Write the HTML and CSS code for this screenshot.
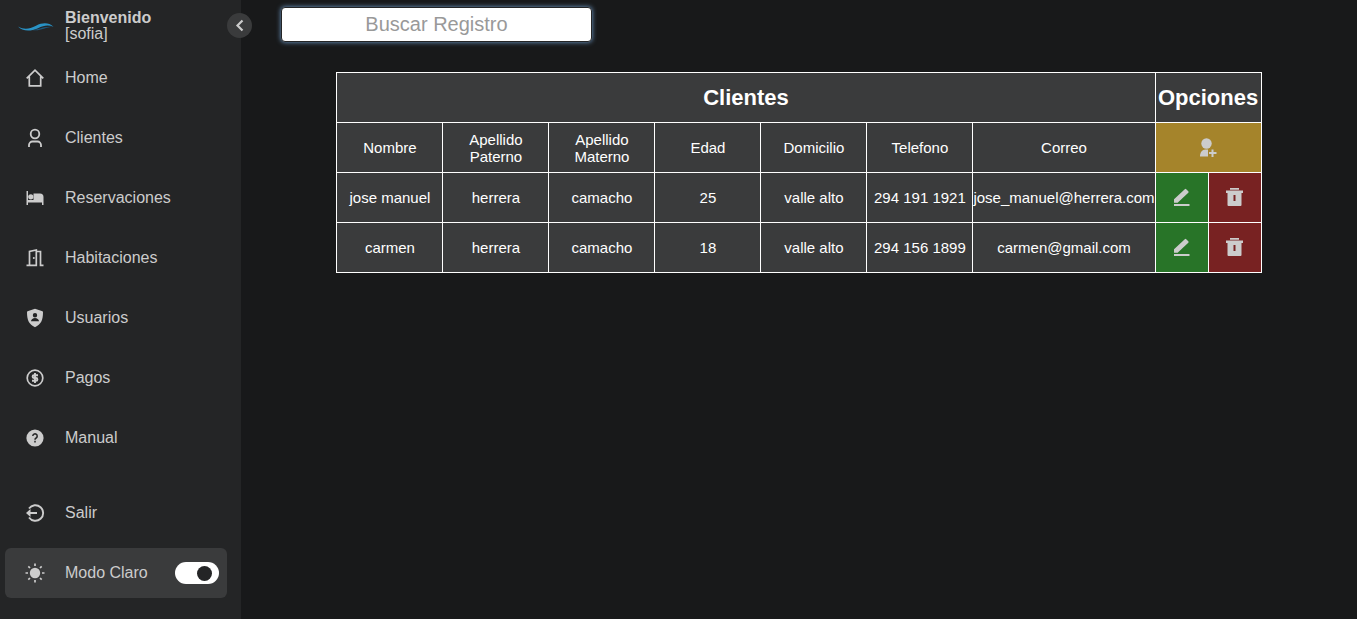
FILE: index.html
```html
<!DOCTYPE html>
<html lang="es">
<head>
<meta charset="utf-8">
<meta name="viewport" content="width=device-width, initial-scale=1">
<title>Clientes</title>
<link rel="stylesheet" href="styles.css">
</head>
<body>
<svg class="sprite" aria-hidden="true">
  <symbol id="edit" viewBox="0 0 20 20"><path d="M2 11.300v3.400h3.600L16.300 4.700a1 1 0 0 0 0-1.400l-2.100-2.100a1 1 0 0 0-1.400 0z" fill="currentColor"/><path d="M2 17H17.500" stroke="currentColor" stroke-width="2"/></symbol>
  <symbol id="trash" viewBox="0 0 20 20"><path fill="currentColor" fill-rule="evenodd" d="M5 0h9v1.800H5zM1 2.500h17V5h-1.500v12a1 1 0 0 1-1 1h-12a1 1 0 0 1-1-1V5H1zM8.500 7v6h2V7z"/></symbol>
</svg>
<aside class="sidebar">
  <header class="profile">
    <svg class="logo" viewBox="0 -2 36 12" aria-hidden="true">
      <path d="M0 4.500C6 7.800 11 7.300 18 3.700 25 .1 31 .6 35.500 4.700 30 2.600 26 3.300 20 6.200 12 10 4 9.200 0 4.500z" fill="#2993c6"/>
      <path d="M14 8C21 8 24 3.800 35 4.800 27 5.300 22 9.500 14 8z" fill="#1d587d"/>
    </svg>
    <div><strong>Bienvenido</strong><span>[sofia]</span></div>
    <button class="collapse" type="button" aria-label="Contraer menú"><svg viewBox="0 0 20 20"><path d="M12.500 4.500 7.500 9.500l5 5" fill="none" stroke="currentColor" stroke-width="2.200"/></svg></button>
  </header>
  <nav class="menu">
    <a href="#"><svg viewBox="0 0 20 20"><path d="M1.700 10.300 10 2.200l8.300 8.100M4.300 8.500v9.300h11.400V8.500" fill="none" stroke="currentColor" stroke-width="1.700"/></svg>Home</a>
    <a href="#"><svg viewBox="0 0 20 20"><g fill="none" stroke="currentColor" stroke-width="1.800"><circle cx="10" cy="6" r="4.300"/><path d="M4 19v-2a3.500 3.500 0 0 1 3.500-3.500h5A3.500 3.500 0 0 1 16 17v2"/></g></svg>Clientes</a>
    <a href="#"><svg viewBox="0 0 20 20"><path fill="currentColor" d="M1.500 3H3v9h5.500V5.500H15A3.500 3.500 0 0 1 18.500 9v8H17v-2.500H3V17H1.500z"/><circle cx="5.800" cy="8.800" r="2.600" fill="currentColor"/></svg>Reservaciones</a>
    <a href="#"><svg viewBox="0 0 20 20"><path d="M1.500 17.300h3V3.500L11.300 2v15.300H4.500M11 3.500h4.500v13.800h3" fill="none" stroke="currentColor" stroke-width="1.700"/><circle cx="8.800" cy="10" r="1" fill="currentColor"/></svg>Habitaciones</a>
    <a href="#"><svg viewBox="0 0 20 20"><path fill="currentColor" fill-rule="evenodd" d="M10 .8 17.500 3.300a1 1 0 0 1 .5 1c0 8-2 12-8 15-6-3-8-7-8-15a1 1 0 0 1 .5-1zM10 5a2.200 2.200 0 1 0 0 4.400A2.200 2.200 0 0 0 10 5zM6 13.300h8c0-2-2-3.300-4-3.300s-4 1.300-4 3.300z"/></svg>Usuarios</a>
    <a href="#"><svg viewBox="0 0 20 20"><g fill="none" stroke="currentColor"><circle cx="10" cy="10" r="7.800" stroke-width="1.700"/><path d="M13 7.200H9a1.400 1.400 0 0 0 0 2.800h2a1.400 1.400 0 0 1 0 2.800H7M10 5v10" stroke-width="1.900"/></g></svg>Pagos</a>
    <a href="#"><svg viewBox="0 0 20 20"><circle cx="10" cy="10" r="8.600" fill="currentColor"/><path d="M7.800 8a2.200 2.200 0 1 1 3.300 2c-.8.400-1.100.8-1.100 1.700M10 12.800v1.700" fill="none" stroke="#242526" stroke-width="1.500"/></svg>Manual</a>
  </nav>
  <div class="menu">
    <a href="#"><svg viewBox="0 0 20 20"><path d="M4 5.500A7.800 7.800 0 1 1 4 14.500M4 10h8" fill="none" stroke="currentColor" stroke-width="1.900"/><path d="M5.500 6v8L1 10z" fill="currentColor"/></svg>Salir</a>
    <label class="mode"><svg viewBox="0 0 20 20"><circle cx="10" cy="10" r="5.200" fill="currentColor"/><path d="M10 .5v2.500M10 17v2.500M.5 10H3M17 10h2.500M3.300 3.300 5 5M15 15l1.700 1.700M3.300 16.700 5 15M15 5l1.700-1.700" stroke="currentColor" stroke-width="1.700"/></svg><span>Modo Claro</span><input type="checkbox" role="switch" checked></label>
  </div>
</aside>
<main class="content">
  <input class="search" type="text" placeholder="Buscar Registro" aria-label="Buscar Registro">
  <table class="clients">
    <thead>
      <tr class="title"><th colspan="7">Clientes</th><th colspan="2">Opciones</th></tr>
      <tr class="fields"><th>Nombre</th><th>Apellido Paterno</th><th>Apellido Materno</th><th>Edad</th><th>Domicilio</th><th>Telefono</th><th>Correo</th>
        <td class="action add" colspan="2"><button type="button" aria-label="Agregar cliente"><svg viewBox="0 0 20 20"><circle cx="8.500" cy="5.500" r="5.200" fill="currentColor"/><path d="M2 18.500c0-4 2-7 5.500-7H10v7z" fill="currentColor"/><path d="M14.500 11.500v7.500M11 15h7.500" stroke="currentColor" stroke-width="2"/></svg></button></td></tr>
    </thead>
    <tbody>
      <tr><td>jose manuel</td><td>herrera</td><td>camacho</td><td>25</td><td>valle alto</td><td>294 191 1921</td><td>jose_manuel@herrera.com</td>
        <td class="action edit"><button type="button" aria-label="Editar jose manuel"><svg><use href="#edit"/></svg></button></td><td class="action delete"><button type="button" aria-label="Eliminar jose manuel"><svg><use href="#trash"/></svg></button></td></tr>
      <tr><td>carmen</td><td>herrera</td><td>camacho</td><td>18</td><td>valle alto</td><td>294 156 1899</td><td>carmen@gmail.com</td>
        <td class="action edit"><button type="button" aria-label="Editar carmen"><svg><use href="#edit"/></svg></button></td><td class="action delete"><button type="button" aria-label="Eliminar carmen"><svg><use href="#trash"/></svg></button></td></tr>
    </tbody>
  </table>
</main>
</body>
</html>
```

FILE: styles.css
```css
* { box-sizing: border-box; }
body {
  display: flex;
  min-height: 100vh;
  margin: 0;
  background: #18191a;
  color: #ccc;
  font: 16px/16px "Liberation Sans", Arial, sans-serif;
}
button { font: inherit; color: #ccc; border: 0; padding: 0; cursor: pointer; }
svg { width: 20px; height: 20px; display: block; }
.sprite { display: none; }

.sidebar {
  flex: 0 0 241px;
  display: flex;
  flex-direction: column;
  padding: 0 14px 21px 5px;
  background: #242526;
}
.profile { position: relative; display: flex; align-items: center; height: 53px; padding-bottom: 2px; }
.profile strong, .profile span { display: block; }
.logo { width: 36px; height: 12px; margin: 0 11px 0 13px; }
.collapse {
  position: absolute;
  right: -25px;
  top: 13px;
  display: grid;
  place-items: center;
  width: 25px;
  height: 25px;
  border-radius: 50%;
  background: #3a3b3c;
}
.menu { display: flex; flex-direction: column; gap: 10px; }
nav.menu { margin-bottom: auto; }
.menu a, .mode {
  display: flex;
  align-items: center;
  height: 50px;
  border-radius: 6px;
  color: inherit;
  text-decoration: none;
}
.menu svg { margin: 0 20px; flex: none; }
.mode { background: #3a3b3c; padding-right: 8px; }
.mode input {
  appearance: none;
  display: flex;
  align-items: center;
  width: 44px;
  height: 22px;
  margin: 0 0 0 auto;
  padding: 0 7px;
  border-radius: 11px;
  background: #fff;
}
.mode input::before { content: ""; width: 15px; height: 15px; border-radius: 50%; background: #242526; }
.mode input:checked::before { margin-left: auto; }

.content { flex: 1; min-width: 0; padding: 7px 40px; }
.search {
  appearance: none;
  display: block;
  width: 311px;
  max-width: 100%;
  height: 35px;
  margin: 0 0 30px;
  padding: 0 10px;
  border: 1px solid #242526;
  border-radius: 4px;
  outline: 0;
  background: #fff;
  box-shadow: 0 0 5px #719ece;
  color: #242526;
  font: 20px "Liberation Sans", Arial, sans-serif;
  text-align: center;
}
.search::placeholder { color: #999; }

.clients {
  margin: 0 auto;
  border-collapse: collapse;
  background: #3a3b3c;
  color: #fff;
  font-size: 15px;
  line-height: 17px;
  text-align: center;
}
.clients th, .clients td { width: 106px; height: 50px; padding: 0; border: 1px solid #fff; font-weight: 400; }
.clients .title th { font-size: 22px; line-height: 26px; font-weight: 700; }
.clients .action { width: 53px; }
.clients .add { width: 106px; background: #a5842b; }
.clients .edit { background: #287428; }
.clients .delete { background: #782222; }
.action button { display: grid; place-items: center; width: 100%; height: 49px; background: none; }
```
